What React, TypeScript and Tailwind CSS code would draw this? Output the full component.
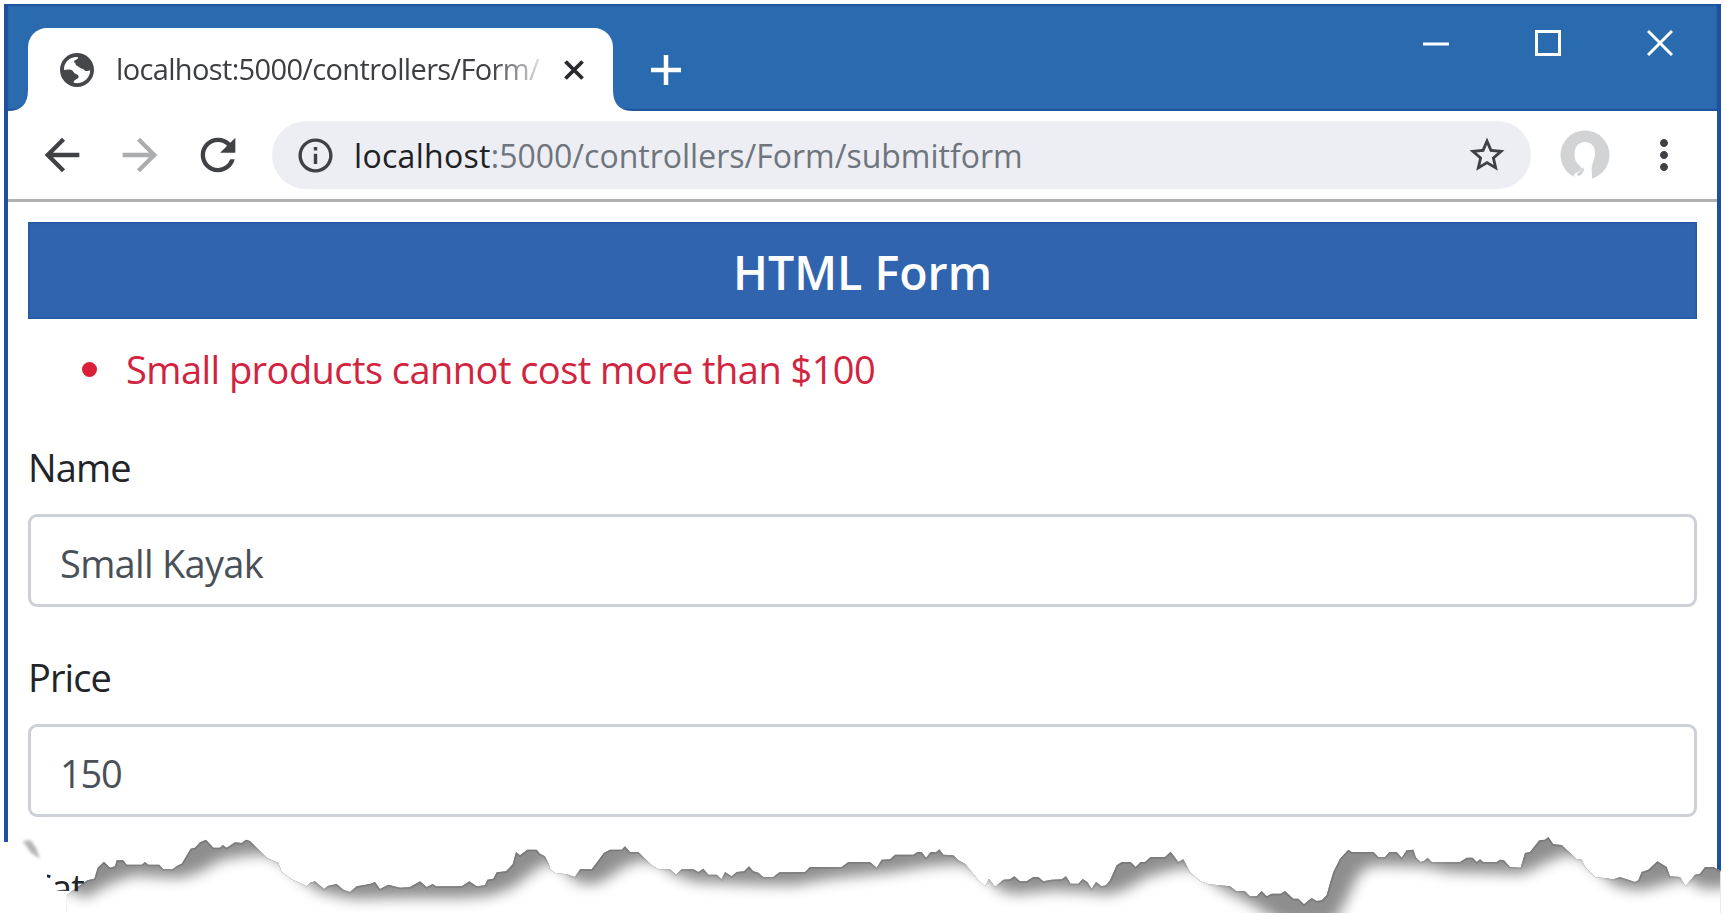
import { type ReactNode } from 'react';
import { MdArrowBack, MdArrowForward, MdInfoOutline, MdMoreVert, MdRefresh, MdStarBorder } from 'react-icons/md';

const TORN_TOP =
  '200,235 225,215 262,190 283,185 293,152 312,134 330,152 345,148 350,130 370,130 380,143 425,143 435,135 445,143 478,143 490,157 518,157 530,147 545,140 572,95 585,92 600,76 618,68 640,92 660,92 668,84 680,92 705,76 725,78 738,68 750,72 800,122 835,138 845,165 875,187 920,208 930,197 945,193 972,216 985,206 1010,201 1030,218 1050,225 1070,208 1110,201 1125,195 1140,216 1165,203 1200,212 1230,210 1260,193 1280,210 ' +
  '1298,201 1308,208 1385,208 1408,193 1430,208 1455,205 1462,188 1480,185 1490,166 1518,163 1538,142 1548,105 1560,115 1582,98 1610,98 1620,110 1635,118 1648,145 1648,155 1665,168 1700,172 1725,180 1740,157 1775,157 1812,107 1830,98 1865,98 1875,88 1890,105 1915,105 1955,145 1975,157 2010,157 2028,173 2045,157 2080,157 2095,165 2110,155 2125,173 2150,173 2165,187 2175,165 2195,178 2210,165 2232,163 2247,148 2260,163 2275,167 2290,180 2320,180 2338,166 2415,165 2430,150 2525,150 2545,135 ' +
  '2610,135 2630,152 2645,128 2670,127 2685,113 2740,113 2752,105 2765,105 2778,122 2792,105 2808,106 2818,97 2830,113 2860,115 2875,130 2895,140 2935,190 2955,208 2967,185 2985,210 3010,188 3030,187 3043,178 3060,193 3080,193 3100,180 3115,180 3130,193 3155,188 3185,187 3198,178 3212,200 3235,200 3248,186 3262,195 3275,215 3288,195 3305,208 3318,205 3330,190 3350,145 3365,135 3392,135 3407,150 3422,135 3435,135 3452,120 3495,120 3512,104 3535,135 3550,127 3570,165 3600,192 3625,202 3690,208 3710,223 3735,223 3750,238 3770,238 3785,222 3800,238 3815,230 3842,230 3855,222 ' +
  '3880,245 3895,245 3912,262 3935,243 3950,252 3965,250 3980,235 3988,205 4000,165 4020,125 4045,98 4055,105 4120,105 4135,120 4155,120 4168,105 4190,105 4205,122 4220,100 4240,98 4248,122 4262,135 4272,132 4283,122 4295,135 4380,135 4400,122 4418,122 4430,135 4440,127 4450,135 4490,135 4500,128 4512,130 4530,150 4562,152 4575,108 4590,105 4618,70 4635,68 4645,60 4660,82 4685,84 4730,127 4745,128 4755,150 4785,180 4840,187 4860,180 4905,195 4915,190 4925,165 4945,158 4972,133 5000,150 5010,178 5040,180 5057,208 5085,173 5100,170 5115,150 5140,150 5162,162';

const TORN_SHADE =
  '180,225 200,235 255,262 330,220 400,195 540,203 600,185 660,150 740,135 800,132 845,155 890,195 960,245 1060,265 1200,262 1390,262 1475,255 1540,230 1610,175 1648,155 1680,168 1730,215 1770,223 1810,212 1870,170 1915,152 1970,155 2030,196 2090,215 2240,222 2380,225 2490,205 2680,185 2780,168 2870,160 2910,168 2955,200 3010,245 3060,250 3160,240 3260,245 3330,252 3380,235 3440,200 3510,180 3570,170 3610,190 3660,232 3720,262 3770,290 3850,340 4000,340 4030,287 4055,235 4080,185 4120,165 4270,168 4350,185 4470,188 4570,190 4630,160 4690,135 4740,137 4790,180 4850,228 4920,240 4980,225 5030,210 5060,206 5110,235 5200,230';

function TornEdge() {
  return (
    <svg className="absolute left-0 top-[817px] h-[100px] w-[1725px]" viewBox="0 0 5175 300" aria-hidden="true">
      <defs>
        <clipPath id="tear">
          <polygon points={`${TORN_TOP} 5162,288 200,288`} />
        </clipPath>
        <filter id="soft" x="-5%" y="-50%" width="110%" height="200%">
          <feGaussianBlur stdDeviation="20" />
        </filter>
        <filter id="softSmall" x="-30%" y="-30%" width="160%" height="160%">
          <feGaussianBlur stdDeviation="5" />
        </filter>
      </defs>
      <polygon points={`${TORN_TOP} 5175,162 5175,300 190,300`} fill="#fff" />
      <g clipPath="url(#tear)">
        <rect width="5162" height="300" fill="#8e8e8e" />
        <polyline points={TORN_TOP} fill="none" stroke="#7a7a7a" strokeWidth="10" />
        <g transform="translate(0 -20)">
          <polygon points={`${TORN_SHADE} 5300,500 100,500 100,225`} fill="#fff" filter="url(#soft)" />
        </g>
      </g>
      <path d="M0 289H5175V300H0Z" fill="#fff" />
      <polygon points="68,72 92,70 108,92 120,126 92,106" fill="#b5b5b5" filter="url(#softSmall)" />
    </svg>
  );
}

function Globe() {
  return (
    <svg className="size-[34px]" viewBox="0 0 34 34" aria-hidden="true">
      <circle cx="17" cy="17" r="17" fill="#45474b" />
      <path d="M4.2 13.5C5.8 8 10.5 4.2 16.5 4.1L18 4.3C18.7 6.2 15 6.6 14.2 8.2 13.5 9.8 15.8 9.6 15.7 11.3 15.6 13 18 12.6 19.6 14.6 20.8 16.2 23.5 15.6 24.8 17.4 25.8 18.8 28.5 17.6 30.2 17.2 30.2 24 24.6 29.8 17.6 30.2L13.8 29.8C13.2 27.4 15.8 26.6 17.6 25.4 19.4 24 18.8 21.8 16.4 21.2 13.6 20.6 13.6 17.4 10.6 16.8 8 16.3 5.8 17 4 17Z" fill="#fff" />
    </svg>
  );
}

function Avatar() {
  return (
    <svg className="size-[50px]" viewBox="0 0 50 50" aria-hidden="true">
      <circle cx="25" cy="25" r="24.5" fill="#d2d3d5" />
      <path d="M25 12C18 12 14.500 17 14.500 24c0 6 2 9 5.500 12 2 2 1 5-3 6.500-2 .8-3 1.500-3 3L15 51h17v-8c-1-4 0-8 1.500-12 1-3 1.500-5 1.500-8 0-7-4-11-10-11Z" fill="#fff" />
      <path d="M22 38c1 2 0 5-4.500 7" fill="none" stroke="#d2d3d5" strokeWidth="3" />
    </svg>
  );
}

function TitleBar() {
  return (
    <header className="flex h-[107px] shrink-0 items-end bg-[#2a6aaf] shadow-[inset_0_2px_1px_#1f559e,inset_0_-2px_1px_#1f559e]">
      <svg className="h-[83px] w-[20px]" viewBox="0 0 20 83" aria-hidden="true">
        <path d="M20 62V83H0Q20 83 20 62Z" fill="#fff" />
      </svg>
      <div className="flex h-[83px] w-[585px] items-center rounded-t-[19px] bg-white pl-[32px]">
        <Globe />
        <div className="ml-[22px] w-[426px] whitespace-nowrap pb-[2px] text-[29px] tracking-[-0.65px] text-[#3c3e42] [mask-image:linear-gradient(90deg,#000_88%,transparent_102%)]">
          localhost:5000/controllers/Form/
        </div>
        <svg className="ml-[22px] size-[20px]" viewBox="0 0 20 20" aria-hidden="true">
          <path d="M1.500 1.500 18.500 18.500M18.500 1.500 1.500 18.500" stroke="#27292c" strokeWidth="3.800" />
        </svg>
      </div>
      <svg className="h-[83px] w-[20px]" viewBox="0 0 20 83" aria-hidden="true">
        <path d="M0 62V83H20Q0 83 0 62Z" fill="#fff" />
      </svg>
      <svg className="mb-[26px] ml-[18px] size-[30px]" viewBox="0 0 30 30" aria-hidden="true">
        <path d="M15 0V30M0 15H30" stroke="#fff" strokeWidth="4.500" />
      </svg>
      <div className="mb-[55px] ml-auto mr-[44px] flex gap-[86px]">
        <svg className="size-[26px]" viewBox="0 0 26 26" aria-hidden="true"><path d="M0 14H26" stroke="#fff" strokeWidth="3" /></svg>
        <svg className="size-[26px]" viewBox="0 0 26 26" aria-hidden="true"><rect x="1.500" y="1.500" width="23" height="23" fill="none" stroke="#fff" strokeWidth="3" /></svg>
        <svg className="size-[26px]" viewBox="0 0 26 26" aria-hidden="true"><path d="M1 1 25 25M25 1 1 25" stroke="#fff" strokeWidth="3" /></svg>
      </div>
    </header>
  );
}

function Toolbar() {
  return (
    <div className="flex h-[91px] shrink-0 items-center border-b-[3px] border-[#b0b0b0] bg-white text-[#3f4145]">
      <MdArrowBack className="ml-[28px] size-[52px]" />
      <MdArrowForward className="ml-[26px] size-[52px] text-[#acadae]" />
      <MdRefresh className="ml-[26px] size-[52px]" />
      <div className="ml-[28px] flex h-[68px] w-[1259px] items-center rounded-full bg-[#edeef4] pl-[23px] pr-[23px]">
        <MdInfoOutline className="size-[41px]" />
        <div className="ml-[18px] flex-1 whitespace-nowrap pt-[2px] text-[32px] text-[#6f757c]">
          <span className="tracking-[0.3px] text-[#202124]">localhost</span>
          <span>:5000/controllers/Form/submitform</span>
        </div>
        <MdStarBorder className="size-[42px]" />
      </div>
      <div className="ml-[29px]"><Avatar /></div>
      <MdMoreVert className="ml-[30px] size-[48px]" />
    </div>
  );
}

function Field({ label, children }: { label: string; children: ReactNode }) {
  return (
    <div className="mb-[40px] flex flex-col">
      <label className="flex h-[60px] items-center text-[38px] leading-[60px] tracking-[-0.9px] text-[#212529]">{label}</label>
      <div className="mt-[17px] flex h-[93px] items-center rounded-[9px] border-[3px] border-[#cdd0d7] pl-[29px] pt-[7px] text-[38px] tracking-[-0.7px] text-[#495057]">
        {children}
      </div>
    </div>
  );
}

export default function App() {
  return (
    <div className="relative h-[917px] w-[1725px] overflow-hidden bg-white p-[4px] font-['Open_Sans','Noto_Sans',sans-serif]">
      <div className="absolute left-[4px] top-[4px] h-[838px] w-[4px] bg-[#1f4f9f]" />
      <div className="absolute left-[1717px] top-[4px] h-[867px] w-[4px] bg-[#1f4f9f]" />
      <div className="mx-[4px] flex flex-col">
        <TitleBar />
        <Toolbar />
        <main className="flex flex-col px-[20px] pt-[19.5px]">
          <h1 className="flex h-[97.5px] items-center justify-center bg-[#3064ae] pt-[6px] text-[46.5px] font-semibold text-white shadow-[inset_0_0_2px_1px_#23589f]">
            HTML Form
          </h1>
          <ul className="mt-[20px] flex h-[60px] items-center gap-[29px] pl-[54px] text-[38px] tracking-[-0.55px] text-[#d2233f]">
            <li className="contents">
              <span className="size-[15px] rounded-full bg-[#d92036]" />
              <span>Small products cannot cost more than $100</span>
            </li>
          </ul>
          <form className="mt-[37.5px] flex flex-col">
            <Field label="Name">Small Kayak</Field>
            <Field label="Price"><span className="tracking-[-1.2px]">150</span></Field>
            <label className="relative z-10 flex h-[60px] w-[80px] items-center text-[38px] leading-[60px] tracking-[-0.9px] text-[#212529] [clip-path:polygon(19px_17px,56px_13px,56px_35px,27px_34px,27px_23px,19px_21px)]">
              Cat
            </label>
          </form>
        </main>
      </div>
      <TornEdge />
    </div>
  );
}
